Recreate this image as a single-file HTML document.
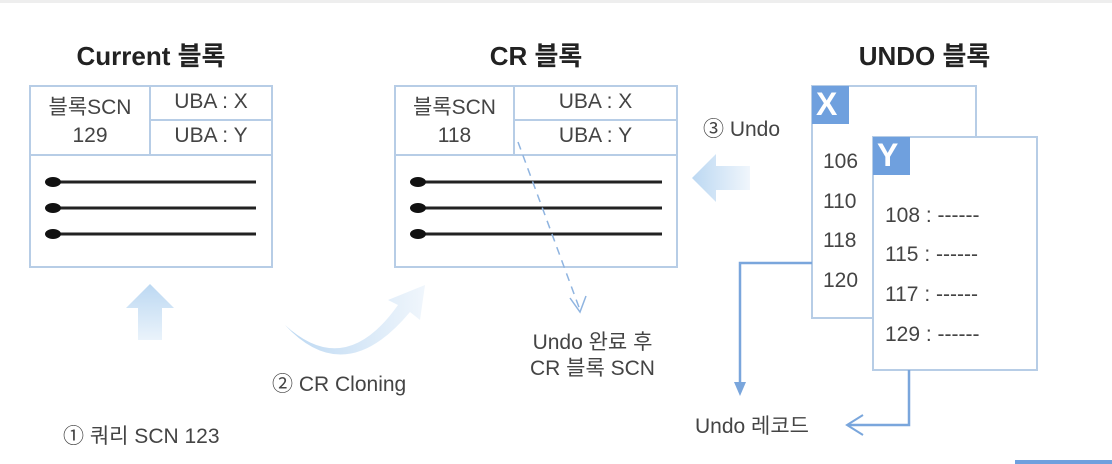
<!DOCTYPE html><html><head><meta charset="utf-8"><style>
body{margin:0;width:1112px;height:464px;background:#fff;overflow:hidden;position:relative;font-family:"Liberation Sans","Noto Sans CJK KR",sans-serif;color:#333}
.t{position:absolute;white-space:nowrap}
.c{position:absolute;text-align:center;white-space:nowrap}
.h{font-weight:bold;font-size:26px;color:#222}
.n{font-size:21px;color:#444}
</style></head><body>
<svg width="1112" height="464" style="position:absolute;left:0;top:0">
<defs><linearGradient id="g1" x1="0" y1="1" x2="0" y2="0"><stop offset="0" stop-color="#eaf3fb"/><stop offset="1" stop-color="#bcd8f2"/></linearGradient>
<linearGradient id="g2" x1="1" y1="0" x2="0" y2="0"><stop offset="0" stop-color="#f0f6fc"/><stop offset="1" stop-color="#bcd8f2"/></linearGradient></defs>
<rect x="0" y="0" width="1112" height="3" fill="#eee"/>
<rect x="1015" y="460" width="97" height="4" fill="#6fa0de"/>
<g fill="none" stroke="#b7cde6" stroke-width="2">
<rect x="30" y="86" width="242" height="181"/><line x1="30" y1="155" x2="272" y2="155"/><line x1="150" y1="86" x2="150" y2="155"/><line x1="150" y1="120" x2="272" y2="120"/>
<rect x="395" y="86" width="282" height="181"/><line x1="395" y1="155" x2="677" y2="155"/><line x1="514" y1="86" x2="514" y2="155"/><line x1="514" y1="120" x2="677" y2="120"/>
<rect x="812" y="86" width="164" height="232" fill="#fff"/>
<rect x="873" y="137" width="164" height="233" fill="#fff"/>
</g>
<g stroke="#222" stroke-width="3"><line x1="53" y1="182" x2="256" y2="182"/><line x1="53" y1="208" x2="256" y2="208"/><line x1="53" y1="234" x2="256" y2="234"/>
<line x1="418" y1="182" x2="662" y2="182"/><line x1="418" y1="208" x2="662" y2="208"/><line x1="418" y1="234" x2="662" y2="234"/></g>
<g fill="#111"><ellipse cx="53" cy="182" rx="8" ry="5"/><ellipse cx="53" cy="208" rx="8" ry="5"/><ellipse cx="53" cy="234" rx="8" ry="5"/>
<ellipse cx="418" cy="182" rx="8" ry="5"/><ellipse cx="418" cy="208" rx="8" ry="5"/><ellipse cx="418" cy="234" rx="8" ry="5"/></g>
<rect x="812" y="86" width="37" height="38" fill="#6fa0de"/>
<rect x="873" y="137" width="37" height="38" fill="#6fa0de"/>
<line x1="518" y1="142" x2="580" y2="310" stroke="#8fb4e0" stroke-width="1.5" stroke-dasharray="8,6"/>
<polyline points="570,298 580,312 586,296" fill="none" stroke="#8fb4e0" stroke-width="1.5"/>
<polyline points="812,263 740,263 740,385" fill="none" stroke="#7aa6dc" stroke-width="2.5"/>
<polygon points="734,382 746,382 740,396" fill="#7aa6dc"/>
<polyline points="909,370 909,425 848,425" fill="none" stroke="#7aa6dc" stroke-width="2.5"/>
<polyline points="863,415 847,425 863,435" fill="none" stroke="#7aa6dc" stroke-width="2"/>
<polygon points="150,284 174,308 162,308 162,340 138,340 138,308 126,308" fill="url(#g1)"/>
<path d="M285,325 Q345,380 398,305 L388,300 L425,285 L420,320 L410,312 Q345,390 285,325Z" fill="url(#g2)"/>
<polygon points="692,178 716,154 716,166 750,166 750,190 716,190 716,202" fill="url(#g2)"/>
</svg>
<div class="c h" style="left:30px;width:242px;top:36px">Current 블록</div>
<div class="c h" style="left:395px;width:282px;top:36px">CR 블록</div>
<div class="c h" style="left:812px;width:225px;top:36px">UNDO 블록</div>
<div class="c n" style="left:30px;width:120px;top:94px;line-height:28px">블록SCN<br>129</div>
<div class="c n" style="left:150px;width:122px;top:90px">UBA : X</div><div class="c n" style="left:150px;width:122px;top:124px">UBA : Y</div>
<div class="c n" style="left:395px;width:119px;top:94px;line-height:28px">블록SCN<br>118</div>
<div class="c n" style="left:514px;width:163px;top:90px">UBA : X</div><div class="c n" style="left:514px;width:163px;top:124px">UBA : Y</div>
<div class="t" style="left:816px;top:86px;font-size:32px;font-weight:bold;color:#fff">X</div>
<div class="t" style="left:877px;top:137px;font-size:32px;font-weight:bold;color:#fff">Y</div>
<div class="t n" style="left:823px;top:150px">106</div><div class="t n" style="left:823px;top:190px">110</div><div class="t n" style="left:823px;top:229px">118</div><div class="t n" style="left:823px;top:269px">120</div>
<div class="t n" style="left:885px;top:204px">108 : ------</div><div class="t n" style="left:885px;top:243px">115 : ------</div><div class="t n" style="left:885px;top:283px">117 : ------</div><div class="t n" style="left:885px;top:323px">129 : ------</div>
<div class="t n" style="left:703px;top:113px">③ Undo</div>
<div class="c n" style="left:520px;width:145px;top:330px;line-height:26px">Undo 완료 후<br>CR 블록 SCN</div>
<div class="t n" style="left:272px;top:368px">② CR Cloning</div>
<div class="t n" style="left:63px;top:420px">① 쿼리 SCN 123</div>
<div class="t n" style="left:695px;top:410px">Undo 레코드</div>
</body></html>
